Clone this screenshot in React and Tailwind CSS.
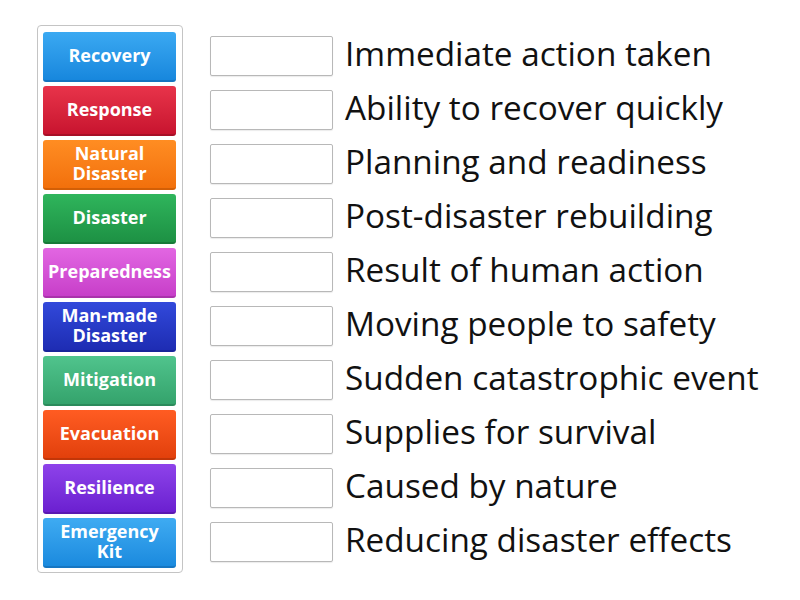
import React from 'react'

const tiles = [
  { label: ['Recovery'], cls: 'from-[#3aa9f2] to-[#1787dd] border-b-[#1474c0]' },
  { label: ['Response'], cls: 'from-[#e8334a] to-[#c8132f] border-b-[#a80f27]' },
  { label: ['Natural', 'Disaster'], cls: 'from-[#ff8d22] to-[#f2700b] border-b-[#d35f06]' },
  { label: ['Disaster'], cls: 'from-[#2fb55c] to-[#1d9144] border-b-[#177a38]' },
  { label: ['Preparedness'], cls: 'from-[#e266e2] to-[#c73ec9] border-b-[#a932ab]' },
  { label: ['Man-made', 'Disaster'], cls: 'from-[#3249db] to-[#1e2cb3] border-b-[#18249a]' },
  { label: ['Mitigation'], cls: 'from-[#50c48d] to-[#34a36c] border-b-[#2b8b5b]' },
  { label: ['Evacuation'], cls: 'from-[#ff5c22] to-[#e2400b] border-b-[#c23608]' },
  { label: ['Resilience'], cls: 'from-[#8e42ea] to-[#6b1fd0] border-b-[#5a18b2]' },
  { label: ['Emergency', 'Kit'], cls: 'from-[#3eabf2] to-[#1a8ade] border-b-[#1676c2]' },
]

const definitions = [
  'Immediate action taken',
  'Ability to recover quickly',
  'Planning and readiness',
  'Post-disaster rebuilding',
  'Result of human action',
  'Moving people to safety',
  'Sudden catastrophic event',
  'Supplies for survival',
  'Caused by nature',
  'Reducing disaster effects',
]

export default function App() {
  return (
    <div className="w-[800px] h-[600px] bg-white flex items-start pt-[25px] pl-[37px] font-['Open_Sans',sans-serif]">
      <div className="w-[146px] border border-[#c4c4c4] rounded-[4px] pl-[5px] pr-[6px] pt-[6px] pb-[4px] flex flex-col gap-[4px]">
        {tiles.map((t) => (
          <div
            key={t.label.join(' ')}
            className={`h-[50px] w-[133px] rounded-[3px] bg-gradient-to-b border-b-2 pb-[2px] flex flex-col items-center justify-center text-center text-white font-bold text-[18px] leading-[20px] whitespace-nowrap ${t.cls}`}
          >
            {t.label.map((l) => (
              <span key={l} className="block h-[20px]">{l}</span>
            ))}
          </div>
        ))}
      </div>
      <div className="ml-[27px] pt-[6px] flex flex-col gap-[4px]">
        {definitions.map((d) => (
          <div key={d} className="h-[50px] flex items-center">
            <div className="w-[123px] h-[40px] border border-[#b8b8b8] rounded-[2px] bg-white shadow-[0_1px_1px_rgba(0,0,0,0.08)]" />
            <span className="ml-[12px] mb-[5px] text-[33.3px] text-[#111] leading-none whitespace-nowrap">{d}</span>
          </div>
        ))}
      </div>
    </div>
  )
}
